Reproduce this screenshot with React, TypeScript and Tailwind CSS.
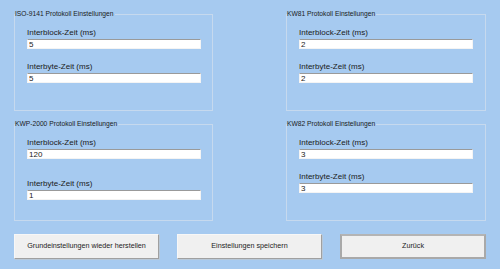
const font = { fontFamily: '"Liberation Sans", Arial, sans-serif' }

function Field({ label, value, className }: { label: string; value: string; className?: string }) {
  return (
    <div className={className}>
      <div className="text-[8px] leading-[10px] text-[#1a1a1a]">{label}</div>
      <input
        readOnly
        value={value}
        className="mt-px block h-[10px] w-[174px] bg-white border border-[#f4f4f4] border-t-[#9a9a9a] px-px text-[8px] leading-[8px] text-[#222] outline-none"
      />
    </div>
  )
}

function Group({
  title,
  children,
}: {
  title: string
  children: React.ReactNode
}) {
  return (
    <fieldset className="h-[102px] border border-[#c6d9ee] p-0 m-0 min-w-0">
      <legend className="p-0 pr-px text-[6.7px] leading-[10px] text-[#1a1a1a]">{title}</legend>
      <div className="pl-[12px]">{children}</div>
    </fieldset>
  )
}

function Btn({ label, primary, className }: { label: string; primary?: boolean; className: string }) {
  return (
    <button
      className={
        'h-[25px] bg-[#f0f0f0] text-[7.2px] text-[#222] ' +
        (primary
          ? 'border-2 border-[#a9a9a9] border-t-[#b4b4b4] '
          : 'border border-[#f7f7f7] border-r-[#a0a0a0] border-b-[#a0a0a0] shadow-[1px_1px_0_#b8c8d8] ') +
        className
      }
    >
      {label}
    </button>
  )
}

export default function App() {
  return (
    <div className="w-[500px] h-[269px] bg-[#a6caf0] pl-[14px] pt-[9px] overflow-hidden" style={font}>
      <div className="grid grid-cols-[199px_200px] gap-x-[73px] gap-y-[8px]">
        <Group title="ISO-9141 Protokoll Einstellungen">
          <Field className="mt-[9px]" label="Interblock-Zeit (ms)" value="5" />
          <Field className="mt-[13px]" label="Interbyte-Zeit (ms)" value="5" />
        </Group>
        <Group title="KW81 Protokoll Einstellungen">
          <Field className="mt-[9px]" label="Interblock-Zeit (ms)" value="2" />
          <Field className="mt-[13px]" label="Interbyte-Zeit (ms)" value="2" />
        </Group>
        <Group title="KWP-2000 Protokoll Einstellungen">
          <Field className="mt-[9px]" label="Interblock-Zeit (ms)" value="120" />
          <Field className="mt-[20px]" label="Interbyte-Zeit (ms)" value="1" />
        </Group>
        <Group title="KW82 Protokoll Einstellungen">
          <Field className="mt-[9px]" label="Interblock-Zeit (ms)" value="3" />
          <Field className="mt-[13px]" label="Interbyte-Zeit (ms)" value="3" />
        </Group>
      </div>
      <div className="mt-[13px] flex gap-[18px]">
        <Btn className="w-[145px]" label="Grundeinstellungen wieder herstellen" />
        <Btn className="w-[145px]" label="Einstellungen speichern" />
        <Btn className="w-[146px]" primary label="Zurück" />
      </div>
    </div>
  )
}
